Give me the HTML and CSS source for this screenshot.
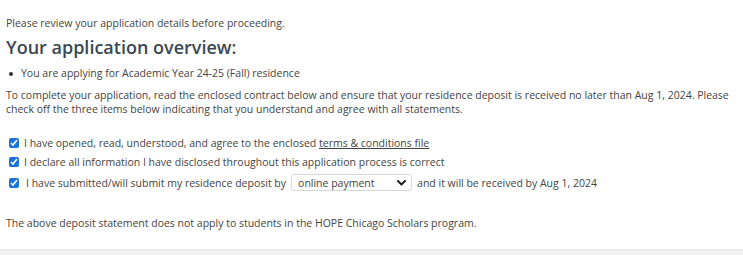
FILE: index.html
```html
<!DOCTYPE html>
<html lang="en">
  <head>
    <meta charset="UTF-8" />
    <title>Application overview</title>
    <link rel="stylesheet" href="styles.css">
  </head>
  <body>
    <div class="container">
      <p class="intro">Please review your application details before proceeding.</p>
      <h2>Your application overview:</h2>
      <ul class="summary">
        <li>You are applying for Academic Year 24-25 (Fall) residence</li>
      </ul>
      <p class="instructions">
        To complete your application, read the enclosed contract below and ensure that your residence deposit is received no later than Aug 1, 2024. Please check off the three items below indicating that you understand and agree with all statements.
      </p>
      <div class="agreements">
        <label class="check-row">
          <input type="checkbox" checked />
          <span>I have opened, read, understood, and agree to the enclosed <a href="#">terms &amp; conditions file</a></span>
        </label>
        <label class="check-row">
          <input type="checkbox" checked />
          <span>I declare all information I have disclosed throughout this application process is correct</span>
        </label>
        <div class="check-row deposit-row">
          <input type="checkbox" checked />
          <span>I have submitted/will submit my residence deposit by</span>
          <span class="select-wrap">
            <select>
              <option>online payment</option>
              <option>cheque</option>
            </select>
            <svg class="chevron" width="9" height="6" viewBox="0 0 9 6">
              <path d="M1 1 L4.5 4.5 L8 1" fill="none" stroke="#222" stroke-width="2" stroke-linecap="round" stroke-linejoin="round" />
            </svg>
          </span>
          <span>and it will be received by Aug 1, 2024</span>
        </div>
      </div>
      <p class="note">The above deposit statement does not apply to students in the HOPE Chicago Scholars program.</p>
    </div>
    <div class="footer-bar"></div>
  </body>
</html>
```

FILE: styles.css
```css
* {
  margin: 0;
  padding: 0;
  box-sizing: border-box;
}
html,
body {
  overflow: hidden;
  background: #ffffff;
  font-family: "Open Sans", "Noto Sans", Arial, sans-serif;
}
body {
  color: #444444;
  font-size: 10.5px;
}
.container {
  padding: 16px 6px 0;
}
.intro {
  line-height: 14px;
}
h2 {
  font-size: 18px;
  font-weight: 600;
  color: #3a4853;
  line-height: 26px;
  margin-top: 4px;
}
.summary {
  list-style: none;
  margin-top: 6px;
}
.summary li {
  position: relative;
  padding-left: 15px;
  line-height: 14px;
}
.summary li::before {
  content: "";
  position: absolute;
  left: 3px;
  top: 6px;
  width: 4px;
  height: 4px;
  border-radius: 50%;
  background: #333333;
}
.instructions {
  margin-top: 8px;
  line-height: 14px;
}
.agreements {
  margin-top: 20px;
  display: flex;
  flex-direction: column;
  gap: 5px;
}
.check-row {
  display: flex;
  align-items: center;
  gap: 5px;
  line-height: 14px;
}
.check-row input[type="checkbox"] {
  width: 10px;
  height: 10px;
  margin: 0 0 0 3px;
  accent-color: #1a73d9;
}
.check-row a {
  color: #444444;
}
.deposit-row span:first-of-type {
  margin-left: 2px;
}
/* select with custom chevron */
.select-wrap {
  position: relative;
  display: flex;
}
.select-wrap select {
  appearance: none;
  -webkit-appearance: none;
  font-family: inherit;
  font-size: 10.5px;
  color: #444444;
  width: 121px;
  height: 17px;
  padding: 0 18px 0 6px;
  border: 1px solid #d6d6d6;
  border-radius: 3px;
  background: #ffffff;
}
.select-wrap .chevron {
  position: absolute;
  right: 6px;
  top: 6px;
  pointer-events: none;
}
.note {
  margin-top: 25px;
  line-height: 14px;
}
.footer-bar {
  position: absolute;
  left: 0;
  right: 0;
  top: 249px;
  height: 10px;
  background: #f1f1f1;
  border-top: 1px solid #e6e6e6;
}
```
